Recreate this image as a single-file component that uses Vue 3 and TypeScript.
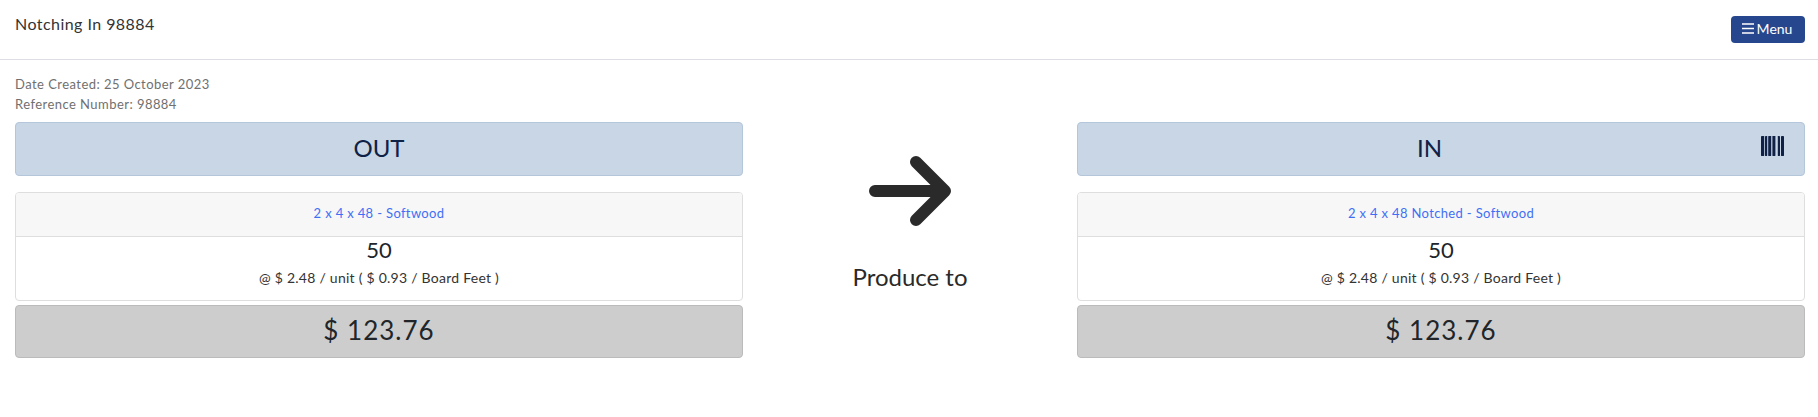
<script setup lang="ts">
interface Side {
  title: string;
  product: string;
  barcode: boolean;
}

const sides: Record<"out" | "in", Side> = {
  out: { title: "OUT", product: "2 x 4 x 48 - Softwood", barcode: false },
  in: { title: "IN", product: "2 x 4 x 48 Notched - Softwood", barcode: true },
};
// x, width
const bars = [
  [0, 3.2],
  [4, 2.2],
  [7.2, 3],
  [11.4, 3],
  [16.8, 2.2],
  [20, 3],
];
</script>

<template>
  <div class="page">
    <header class="topbar">
      <h1 class="title">Notching In 98884</h1>
      <button class="menu-btn" type="button">
        <svg class="menu-icon" width="12" height="11" viewBox="0 0 12 11">
          <path d="M0 1h12M0 5.5h12M0 10h12" stroke="#fff" stroke-width="1.4" fill="none" />
        </svg>
        Menu
      </button>
    </header>

    <section class="meta">
      <div>Date Created: 25 October 2023</div>
      <div>Reference Number: 98884</div>
    </section>

    <main class="columns">
      <div v-for="(side, i) in [sides.out, sides.in]" :key="side.title" class="side" :style="{ order: i * 2 }">
        <div class="side-head" :class="{ 'with-code': side.barcode }">
          <span>{{ side.title }}</span>
          <svg v-if="side.barcode" class="barcode" width="23" height="20" viewBox="0 0 23 20">
            <rect v-for="b in bars" :key="b[0]" :x="b[0]" y="0" :width="b[1]" height="20" rx="0.4" fill="#0f2146" />
          </svg>
        </div>
        <div class="card">
          <div class="card-head"><a class="product">{{ side.product }}</a></div>
          <div class="card-body">
            <div class="qty">50</div>
            <div class="rate">@ $ 2.48 / unit ( $ 0.93 / Board Feet )</div>
          </div>
        </div>
        <div class="total">$ 123.76</div>
      </div>

      <div class="middle">
        <svg class="arrow" width="82" height="70" viewBox="0 0 82 70">
          <path d="M6 35H75M47 6L76 35L47 64" stroke="#2a2a2a" stroke-width="12" fill="none" stroke-linecap="round" stroke-linejoin="round" />
        </svg>
        <div class="produce">Produce to</div>
      </div>
    </main>
  </div>
</template>

<style>
html,
body {
  background: #fff;
}
</style>

<style scoped>
.page {
  font-family: "Lato", "Noto Sans", sans-serif;
  color: #212529;
  height: 417px;
  overflow: hidden;
}
.topbar {
  height: 60px;
  box-sizing: border-box;
  border-bottom: 1px solid #dcdee3;
  padding: 15px 13px 0 15px;
  display: flex;
  justify-content: space-between;
  align-items: flex-start;
}
.title {
  margin: 0;
  font-size: 16px;
  line-height: 18px;
  font-weight: 400;
  letter-spacing: 0.45px;
  color: #333;
}
.menu-btn {
  width: 74px;
  height: 27px;
  margin-top: 1px;
  background: #26478d;
  border: 0;
  border-radius: 4px;
  color: #fff;
  font: inherit;
  font-size: 14px;
  display: flex;
  align-items: center;
  justify-content: center;
  gap: 3px;
  padding: 0 2px 2px 0;
}
.meta {
  padding: 14px 15px 0;
  font-size: 13px;
  line-height: 20px;
  color: #707070;
  letter-spacing: 0.45px;
  height: 62px;
  box-sizing: border-box;
}
.columns {
  display: flex;
  justify-content: space-between;
  padding: 0 13px 0 15px;
}
.side {
  width: 728px;
}
.middle {
  order: 1;
  flex: 1;
  display: flex;
  flex-direction: column;
  align-items: center;
  padding-top: 34px;
}
.arrow {
  margin-left: -1px;
}
.produce {
  font-size: 24px;
  line-height: 30px;
  margin-top: 36px;
  color: #2a2a2a;
  letter-spacing: 0;
}
.side-head {
  position: relative;
  height: 54px;
  box-sizing: border-box;
  background: #c8d6e5;
  border: 1px solid #b3c6da;
  border-radius: 4px;
  color: #0f2146;
  font-size: 24px;
  padding-bottom: 4px;
  display: flex;
  align-items: center;
  justify-content: center;
}
.side-head.with-code {
  padding-right: 23px;
}
.barcode {
  position: absolute;
  right: 20px;
  top: 13px;
}
.card {
  margin-top: 16px;
  border: 1px solid #dedede;
  border-radius: 4px;
  overflow: hidden;
}
.card-head {
  height: 44px;
  box-sizing: border-box;
  background: #f7f7f7;
  border-bottom: 1px solid #dedede;
  padding-bottom: 4px;
  display: flex;
  align-items: center;
  justify-content: center;
  font-size: 13px;
}
.product {
  color: #3f6ff5;
  letter-spacing: 0.35px;
}
.card-body {
  height: 63px;
  display: flow-root;
  text-align: center;
}
.qty {
  font-size: 22px;
  line-height: 30px;
  margin-top: -2px;
}
.rate {
  font-size: 14px;
  line-height: 20px;
  margin-top: 3px;
  color: #333;
  letter-spacing: 0.25px;
}
.total {
  margin-top: 4px;
  height: 53px;
  box-sizing: border-box;
  background: #cdcdcd;
  border: 1px solid #bbb;
  border-radius: 4px;
  font-size: 26px;
  letter-spacing: 1px;
  padding-bottom: 4px;
  display: flex;
  align-items: center;
  justify-content: center;
}
</style>
